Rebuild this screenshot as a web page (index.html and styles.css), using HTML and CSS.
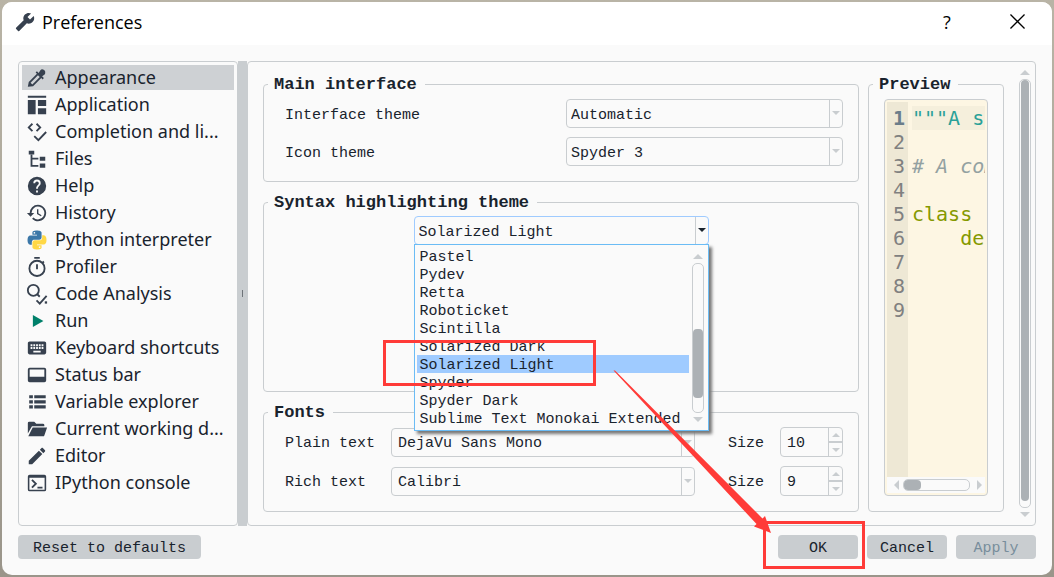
FILE: index.html
```html
<!DOCTYPE html>
<html lang="en">
<head>
<meta charset="utf-8">
<title>Preferences</title>
<link rel="stylesheet" href="styles.css">
</head>
<body>
<div class="window">
  <header class="titlebar">
    <svg class="title-icon" viewBox="0 0 24 24"><path transform="translate(24 0) scale(-1 1)" d="M22.7 19l-9.1-9.1c.9-2.3.4-5-1.5-6.9-2-2-5-2.4-7.4-1.3L9 6 6 9 1.6 4.7C.4 7.1.9 10.1 2.9 12.1c1.9 1.9 4.6 2.4 6.9 1.5l9.1 9.1c.4.4 1 .4 1.4 0l2.3-2.3c.5-.4.5-1.1.1-1.4z"/></svg>
    <h1 class="title">Preferences</h1>
    <button class="title-button" type="button" aria-label="Help">?</button>
    <button class="title-button close" type="button" aria-label="Close"><svg viewBox="0 0 16 16"><path d="M.5.5l15 15M15.5.5l-15 15"/></svg></button>
  </header>

  <main class="body">
    <div class="panes">
      <nav class="sidebar">
        <button class="nav-item selected" type="button"><svg viewBox="0 0 24 24"><path d="M6.92 19L5 17.08 13.06 9 15 10.94zM21 6.500A3.200 3.200 0 0 0 15.500 3.700L13.840 6.410 11.910 4.500 10.500 5.910l1.420 1.420L3 16.250 2 21.500 7.750 21l8.920-8.920 1.420 1.420 1.410-1.410-1.920-1.920 2.400-1.600A3 3 0 0 0 21 6.500z" fill-rule="evenodd"/></svg><span>Appearance</span></button>
        <button class="nav-item" type="button"><svg viewBox="0 0 24 24"><path d="M2 2h20v2H2zM2 6.500h8.500V22H2zM13 6.500h9v6.500h-9zM13 15.500h9V22h-9z"/></svg><span>Application</span></button>
        <button class="nav-item" type="button"><svg viewBox="0 0 24 24"><path class="line" d="M7 3L3 7l4 4M11.500 3l4 4-4 4M9 16.500l4.500 4.500L22 12"/></svg><span>Completion and li...</span></button>
        <button class="nav-item" type="button"><svg viewBox="0 0 24 24"><path d="M3 3h6v4H3zM15 9.500h6v4.500h-6zM15 17h6v4.500h-6z"/><path class="line" d="M6 7v12.500h7.500M6 11.500h7.500"/></svg><span>Files</span></button>
        <button class="nav-item" type="button"><svg viewBox="0 0 24 24"><path d="M15.070 11.250l-.9.920C13.450 12.890 13 13.500 13 15h-2v-.5c0-1.110.450-2.110 1.170-2.830l1.240-1.260C13.780 10.050 14 9.550 14 9a2 2 0 0 0-4 0H8a4 4 0 0 1 8 0c0 .880-.360 1.670-.930 2.250M13 19h-2v-2h2M12 2a10 10 0 1 0 0 20 10 10 0 0 0 0-20z"/></svg><span>Help</span></button>
        <button class="nav-item" type="button"><svg viewBox="0 0 24 24"><path d="M13.500 8H12v5l4.280 2.540.720-1.210-3.500-2.080V8M13 3a9 9 0 0 0-9 9H1l3.960 4.030L9 12H6a7 7 0 1 1 2.060 4.940l-1.420 1.420A9 9 0 1 0 13 3"/></svg><span>History</span></button>
        <button class="nav-item" type="button"><svg viewBox="-2 -2 28 28"><defs><path id="snake" d="M14.250.18l.9.2.73.26.59.3.45.32.34.34.25.34.16.33.1.3.04.26.02.2-.01.13V8.500l-.05.63-.13.55-.21.46-.26.38-.3.31-.33.25-.35.19-.35.14-.33.1-.3.07-.26.04-.21.02H8.770l-.69.05-.59.14-.5.22-.41.27-.33.32-.27.35-.2.36-.15.37-.1.35-.07.32-.04.27-.02.21v3.060H3.170l-.21-.03-.28-.07-.32-.12-.35-.18-.36-.26-.36-.36-.35-.46-.32-.59-.28-.73-.21-.88-.14-1.050-.05-1.230.06-1.220.16-1.040.24-.87.32-.71.36-.57.4-.44.42-.33.42-.24.4-.16.36-.1.32-.05.24-.01h.16l.06.01h8.160v-.83H6.180l-.01-2.750-.02-.37.05-.34.11-.31.17-.28.25-.26.31-.23.38-.2.44-.18.51-.15.58-.12.64-.1.71-.06.77-.04.84-.02 1.270.05zm-6.300 1.980l-.23.33-.08.41.08.41.23.34.33.22.41.09.41-.09.33-.22.23-.34.08-.41-.08-.41-.23-.33-.33-.22-.41-.09-.41.09z"/></defs><use href="#snake" fill="#3b77a8"/><use href="#snake" fill="#ffd845" transform="rotate(180 12 12)"/></svg><span>Python interpreter</span></button>
        <button class="nav-item" type="button"><svg viewBox="0 0 24 24"><circle class="line" cx="12" cy="13.500" r="8.300"/><path class="line" d="M9 2h6M12 9v5.500M18 7.500l1.500-1.500"/></svg><span>Profiler</span></button>
        <button class="nav-item" type="button"><svg viewBox="0 0 24 24"><circle class="line" cx="8" cy="8" r="6"/><path class="line" d="M12 12l3 3M11.500 19l3.500 3.500L22.500 14"/><path d="M20.500 20h2.500v2.500h-2.500z"/></svg><span>Code Analysis</span></button>
        <button class="nav-item" type="button"><svg viewBox="0 0 24 24"><path fill="#00806a" d="M7.500 5.500L19 12 7.500 18.500z"/></svg><span>Run</span></button>
        <button class="nav-item" type="button"><svg viewBox="0 0 24 24"><path d="M20 5H4c-1.100 0-2 .9-2 2v10c0 1.100.9 2 2 2h16c1.100 0 2-.9 2-2V7c0-1.100-.9-2-2-2zm-9 3h2v2h-2V8zm0 3h2v2h-2v-2zM8 8h2v2H8V8zm0 3h2v2H8v-2zm-1 2H5v-2h2v2zm0-3H5V8h2v2zm9 7H8v-2h8v2zm0-4h-2v-2h2v2zm0-3h-2V8h2v2zm3 3h-2v-2h2v2zm0-3h-2V8h2v2z"/></svg><span>Keyboard shortcuts</span></button>
        <button class="nav-item" type="button"><svg viewBox="0 0 24 24"><path fill-rule="evenodd" d="M4 4h16a2 2 0 0 1 2 2v12a2 2 0 0 1-2 2H4a2 2 0 0 1-2-2V6a2 2 0 0 1 2-2zM4 6v8h16V6z"/></svg><span>Status bar</span></button>
        <button class="nav-item" type="button"><svg viewBox="0 0 24 24"><path d="M3.500 4.500h4V8h-4zM9 4.500h12.500V8H9zM3.500 10h4v3.500h-4zM9 10h12.500v3.500H9zM3.500 15.500h4V19h-4zM9 15.500h12.500V19H9z"/></svg><span>Variable explorer</span></button>
        <button class="nav-item" type="button"><svg viewBox="0 0 24 24"><path d="M2 17V5.500A1.500 1.500 0 0 1 3.500 4H9l2.200 2.200h7.300A1.500 1.500 0 0 1 20 7.700V9H6.500zM7.300 10.300H23L20 19a1.500 1.500 0 0 1-1.400 1H2.500z"/></svg><span>Current working d...</span></button>
        <button class="nav-item" type="button"><svg viewBox="0 0 24 24"><path d="M20.710 7.040c.39-.39.39-1.040 0-1.410l-2.340-2.340c-.37-.39-1.020-.39-1.410 0l-1.840 1.830 3.750 3.750M3 17.250V21h3.750L17.810 9.930l-3.750-3.750L3 17.250z"/></svg><span>Editor</span></button>
        <button class="nav-item" type="button"><svg viewBox="0 0 24 24"><path fill-rule="evenodd" d="M4 3h16a2 2 0 0 1 2 2v14a2 2 0 0 1-2 2H4a2 2 0 0 1-2-2V5a2 2 0 0 1 2-2zM3.700 6.300v13h16.600v-13z"/><path class="line" d="M6.500 8.500l4.300 4.300-4.300 4.300M12.500 17H18"/></svg><span>IPython console</span></button>
      </nav>
      <div class="splitter"></div>

      <section class="content">
        <div class="groups">
          <fieldset class="group">
            <legend>Main interface</legend>
            <div class="form two-col">
              <label for="ui-theme">Interface theme</label>
              <span class="combo"><select id="ui-theme"><option>Automatic</option></select></span>
              <label for="icon-theme">Icon theme</label>
              <span class="combo"><select id="icon-theme"><option>Spyder 3</option></select></span>
            </div>
          </fieldset>

          <fieldset class="group grow">
            <legend>Syntax highlighting theme</legend>
            <div class="scheme">
              <span class="combo active"><select aria-label="Syntax highlighting theme"><option>Solarized Light</option></select></span>
              <div class="popup">
                <ul class="options" role="listbox">
                  <li>Pastel</li>
                  <li>Pydev</li>
                  <li>Retta</li>
                  <li>Roboticket</li>
                  <li>Scintilla</li>
                  <li>Solarized Dark</li>
                  <li class="current">Solarized Light</li>
                  <li>Spyder</li>
                  <li>Spyder Dark</li>
                  <li>Sublime Text Monokai Extended</li>
                </ul>
                <div class="scrollbar popup-scroll"><i class="tri up"></i><div class="track"><div class="thumb"></div></div><i class="tri down"></i></div>
              </div>
            </div>
          </fieldset>

          <fieldset class="group">
            <legend>Fonts</legend>
            <div class="form fonts">
              <label for="plain">Plain text</label>
              <span class="combo wide-pad"><select id="plain"><option>DejaVu Sans Mono</option></select></span>
              <label class="size" for="plain-size">Size</label>
              <span class="spin"><input id="plain-size" type="number" value="10"><span class="steps"><button type="button" aria-label="Increase"><i class="tri up"></i></button><button type="button" aria-label="Decrease"><i class="tri down"></i></button></span></span>
              <label for="rich">Rich text</label>
              <span class="combo wide-pad"><select id="rich"><option>Calibri</option></select></span>
              <label class="size" for="rich-size">Size</label>
              <span class="spin"><input id="rich-size" type="number" value="9"><span class="steps"><button type="button" aria-label="Increase"><i class="tri up"></i></button><button type="button" aria-label="Decrease"><i class="tri down"></i></button></span></span>
            </div>
          </fieldset>
        </div>

        <fieldset class="group preview">
          <legend>Preview</legend>
          <div class="editor">
            <div class="code-area">
              <div class="gutter"><b>1</b><span>2</span><span>3</span><span>4</span><span>5</span><span>6</span><span>7</span><span>8</span><span>9</span></div>
              <pre class="code"><span class="row now">"""A s</span><span class="row"> </span><span class="row comment"># A com</span><span class="row"> </span><span class="row keyword">class</span><span class="row keyword">    de</span></pre>
            </div>
            <div class="hscroll"><i class="tri left"></i><div class="track"><div class="thumb"></div></div><i class="tri right"></i></div>
          </div>
        </fieldset>

        <div class="scrollbar page-scroll"><i class="tri up"></i><div class="track"><div class="thumb"></div></div><i class="tri down"></i></div>
      </section>
    </div>

    <footer class="actions">
      <button class="btn reset" type="button">Reset to defaults</button>
      <button class="btn" type="button">OK</button>
      <button class="btn" type="button">Cancel</button>
      <button class="btn" type="button" disabled>Apply</button>
    </footer>
  </main>
</div>

<svg class="annotations" viewBox="0 0 1054 577">
  <path class="mark" d="M384.500 341.500h210v43h-210zM764.500 522.500h99v45h-99z"/>
  <path class="arrow" d="M613.500 370.500h1.500L762.500 518.500l2.500-2.500 6 17-17-6.500 2.500-2.500z"/>
</svg>
</body>
</html>
```

FILE: styles.css
```css
:root {
  --line: #c9cdd0;
  --thumb: #acb1b5;
  --ink: #19232d;
  --paper: #fafafa;
  --blue: #9fcbff;
}

* { box-sizing: border-box; }

body {
  margin: 0;
  height: 100vh;
  padding: 2px;
  background: linear-gradient(#b9b4a6, #aaa598 50%, #9a958a);
  font: 15px/18px "Liberation Mono", monospace;
  color: var(--ink);
}

button, select, input { font: inherit; color: inherit; }
button { padding: 0; border: 0; background: none; }

.window {
  display: flex;
  flex-direction: column;
  height: 100%;
  border-radius: 10px;
  background: var(--paper);
  overflow: hidden;
}

.titlebar {
  display: flex;
  align-items: center;
  height: 43px;
  padding: 0 15px 4px 13px;
  background: #fff;
}
.title-icon { width: 20px; height: 20px; fill: #37414f; }
.title {
  flex: 1;
  margin: 0 0 0 7px;
  font: 18px/24px "Open Sans", "Noto Sans", sans-serif;
  color: #000;
}
.title-button {
  width: 40px;
  height: 24px;
  margin-right: 30px;
  font: 18px/24px "Open Sans", sans-serif;
  color: #000;
}
.title-button.close { margin-right: 0; }
.title-button svg { width: 15px; height: 15px; display: block; margin: auto; }
.title-button path { stroke: #000; stroke-width: 1.4; }

.body {
  flex: 1;
  display: flex;
  flex-direction: column;
  min-height: 0;
  padding: 16px;
}

.panes { flex: 1; display: flex; min-height: 0; }

.sidebar {
  display: flex;
  flex-direction: column;
  gap: 2px;
  width: 220px;
  padding: 3px;
  border: 1px solid var(--line);
  border-radius: 4px;
}
.nav-item {
  display: flex;
  align-items: center;
  gap: 7px;
  height: 25px;
  padding: 0 2px 0 4px;
  font: 18px/25px "Noto Sans", "Open Sans", sans-serif;
  text-align: left;
}
.nav-item.selected { background: #ced1d4; }
.nav-item svg { flex: none; width: 22px; height: 22px; fill: #37414f; }
.nav-item span { white-space: nowrap; }
.line { fill: none; stroke: #37414f; stroke-width: 2; }

.splitter {
  display: flex;
  align-items: center;
  justify-content: center;
  width: 9px;
  background: var(--line);
}
.splitter::before { content: ""; width: 1px; height: 7px; background: #6d7378; }

.content {
  flex: 1;
  display: flex;
  min-width: 0;
  padding: 8px 4px 13px 15px;
  border: 1px solid var(--line);
  border-radius: 4px;
}

.groups {
  flex: 1;
  display: flex;
  flex-direction: column;
  gap: 10px;
  min-width: 0;
  padding-top: 4px;
}

.group {
  min-width: 0;
  margin: 0;
  padding: 5px 15px 15px 21px;
  border: 1px solid var(--line);
  border-radius: 4px;
}
.group legend {
  margin-left: -17px;
  padding: 2px 8px 0 6px;
  font-size: 17px;
  line-height: 18px;
  font-weight: bold;
}
.grow { flex: 1; padding: 4px 15px 0; }
.grow legend { margin-left: -11px; }

.form { display: grid; align-items: center; row-gap: 9px; }
.form label { padding-top: 4px; }
.two-col { grid-template-columns: 1fr 277px; }
.fonts { grid-template-columns: 106px 1fr 85px 63px; }
.form .size { padding-left: 33px; }

.combo { position: relative; display: block; height: 29px; }
.combo select {
  appearance: none;
  width: 100%;
  height: 100%;
  padding: 4px 16px 0 4px;
  border: 1px solid var(--line);
  border-radius: 4px;
  background: transparent;
}
.combo.wide-pad select { padding-left: 6px; }
.combo::before {
  content: "";
  position: absolute;
  top: 1px;
  bottom: 1px;
  right: 13px;
  border-left: 1px solid var(--line);
}
.combo::after {
  content: "";
  position: absolute;
  top: 12px;
  right: 3px;
  border: 4px solid transparent;
  border-top-color: var(--line);
  border-bottom: 0;
}
.combo.active select { border-color: var(--blue); }
.combo.active::after { border-top-color: var(--ink); }

.scheme { position: relative; width: 295px; max-width: 100%; margin: 0 auto; }

.popup {
  position: absolute;
  z-index: 2;
  top: 28px;
  left: 0;
  display: flex;
  gap: 3px;
  width: 100%;
  padding: 2px 4px 3px 2px;
  border: 1px solid #6bbcf5;
  background: var(--paper);
  box-shadow: 3px 3px 3px #777;
}
.options { flex: 1; margin: 0; padding: 0; list-style: none; white-space: nowrap; }
.options li { height: 18px; padding-left: 3px; line-height: 22px; }
.options .current { background: var(--blue); }

.scrollbar { display: flex; flex-direction: column; align-items: center; width: 12px; }
.track { border: 1px solid var(--line); border-radius: 5px; }
.scrollbar .track { flex: 1; width: 100%; margin: 4px 0; }
.thumb { border-radius: 4px; background: var(--thumb); }
.popup-scroll { padding: 7px 0 5px; }
.popup-scroll .track { display: flex; flex-direction: column; justify-content: flex-end; padding-bottom: 14px; }
.popup-scroll .thumb { height: 69px; }
.page-scroll { margin: 0 0 -5px 15px; }
.page-scroll .track { padding: 0 1px 6px; }
.page-scroll .thumb { height: 100%; }

.tri { width: 0; height: 0; border: 5px solid transparent; }
.tri.up { border-top: 0; border-bottom-color: var(--line); }
.tri.down { border-bottom: 0; border-top-color: var(--line); }
.tri.left { border-left: 0; border-right-color: var(--line); }
.tri.right { border-right: 0; border-left-color: var(--line); }

.spin {
  display: flex;
  height: 30px;
  border: 1px solid var(--line);
  border-radius: 4px;
}
.spin input {
  appearance: textfield;
  flex: 1;
  width: 0;
  min-width: 0;
  padding: 4px 6px 0;
  border: 0;
  background: transparent;
}
.spin input::-webkit-inner-spin-button { appearance: none; }
.steps { display: flex; flex-direction: column; width: 14px; border-left: 1px solid var(--line); }
.steps button { flex: 1; display: flex; align-items: center; justify-content: center; }
.steps button + button { border-top: 2px solid var(--line); }
.steps .tri { border-left-width: 4px; border-right-width: 4px; }
.steps .up { border-bottom-width: 4px; }
.steps .down { border-top-width: 4px; }

.preview {
  display: flex;
  flex-direction: column;
  width: 136px;
  margin: 4px 0 0 9px;
  padding: 5px 15px 15px;
}
.preview legend { margin-left: -11px; }
.editor {
  flex: 1;
  display: flex;
  flex-direction: column;
  padding: 2px;
  border: 1px solid var(--line);
  border-radius: 4px;
  background: #fdf6e3;
  font: 20px/24px "DejaVu Sans Mono", monospace;
}
.code-area { flex: 1; display: flex; min-height: 0; }
.gutter {
  display: flex;
  flex-direction: column;
  width: 21px;
  padding: 4px 3px 0 0;
  background: #eee8d5;
  color: #808080;
  text-align: right;
}
.gutter b { color: #6b7d8a; }
.code { flex: 1; min-width: 0; margin: 0; padding: 4px 0 0 4px; overflow: hidden; font: inherit; }
.row { display: block; overflow: hidden; }
.now { background: #f5efdc; color: #2aa198; }
.comment { color: #93a1a1; font-style: italic; }
.keyword { color: #859900; }

.hscroll {
  display: flex;
  align-items: center;
  gap: 4px;
  height: 16px;
  padding: 0 3px 0 7px;
  background: var(--paper);
}
.hscroll .track { flex: 1; height: 12px; margin-right: 3px; }
.hscroll .thumb { width: 17px; height: 10px; }

.actions { display: flex; gap: 9px; padding-top: 9px; }
.btn { width: 80px; height: 24px; padding-top: 3px; border-radius: 4px; background: var(--line); }
.btn:disabled { color: #788d9c; }
.reset { width: 183px; margin-right: auto; }

.annotations {
  position: absolute;
  z-index: 3;
  top: 0;
  left: 0;
  width: 100vw;
  height: 100vh;
  pointer-events: none;
}
.mark { fill: none; stroke: #ff3b38; stroke-width: 3; }
.arrow { fill: #ff3b38; }
```
